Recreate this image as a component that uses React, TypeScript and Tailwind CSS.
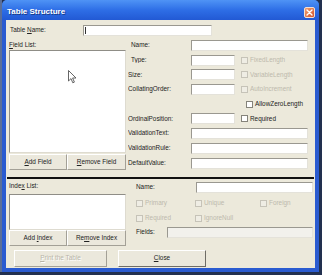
import React from 'react';

const font = { fontFamily: '"Liberation Sans", Arial, sans-serif' };

const U: React.FC<{ children: React.ReactNode }> = ({ children }) => <span className="underline">{children}</span>;

const Input: React.FC<{ w: string; disabled?: boolean; caret?: boolean }> = ({ w, disabled, caret }) => (
  <div
    className={`${w} h-[11px] border border-t-[#9a9890] border-l-[#9a9890] border-r-[#e4e2da] border-b-[#e4e2da] ${
      disabled ? 'bg-[#f2f1ec]' : 'bg-white'
    } relative`}
  >
    {caret && <div className="absolute left-[1px] top-[1px] w-[1px] h-[7px] bg-[#333]" />}
  </div>
);

const Check: React.FC<{ label: string; disabled?: boolean; className?: string }> = ({ label, disabled, className = '' }) => (
  <div className={`flex items-center h-[10px] ${className}`}>
    <div
      className={`w-[7px] h-[7px] border ${
        disabled ? 'border-[#c6c3b8] bg-[#efede4]' : 'border-[#85837a] bg-white'
      }`}
    />
    <span className={`ml-[2px] ${disabled ? 'text-[#bdb9ad]' : 'text-[#222]'}`}>{label}</span>
  </div>
);

const Button: React.FC<{ w: string; h?: string; disabled?: boolean; strong?: boolean; children: React.ReactNode }> = ({
  w,
  h = 'h-[16px]',
  disabled,
  strong,
  children,
}) => (
  <div
    className={`${w} ${h} flex items-center justify-center bg-[#ebe8dc] border border-t-white border-l-white ${
      strong ? 'border-r-[#6e6c66] border-b-[#6e6c66]' : 'border-r-[#a3a096] border-b-[#a3a096]'
    } ${disabled ? 'text-[#b9b5a9]' : 'text-[#222]'}`}
  >
    <span className="whitespace-pre">{children}</span>
  </div>
);

const FieldRow: React.FC<{ label: string; input?: 'short' | 'wide'; check?: string; checkDisabled?: boolean; pad?: boolean }> = ({
  label,
  input,
  check,
  checkDisabled,
  pad,
}) => (
  <div className="flex items-center h-[11px]">
    <div className={`w-[63px] shrink-0 ${pad ? 'pl-[3px]' : ''} text-[#222] whitespace-nowrap overflow-hidden`}>{label}</div>
    {input === 'wide' && <Input w="w-[117px]" />}
    {input === 'short' && <Input w="w-[44px]" />}
    {!input && <div className="w-[49px]" />}
    {check && <Check label={check} disabled={checkDisabled} className="ml-[6px]" />}
  </div>
);

const App: React.FC = () => {
  return (
    <div className="w-[322px] h-[275px] bg-[#22304f] overflow-hidden text-[6.4px] leading-none" style={font}>
      <div className="flex h-[272px]">
        <div className="w-[2px] bg-[#5b6f98]" />
        <div className="w-[317px] h-[272px] bg-[#2a5bd0] rounded-t-[5px] flex flex-col">
          {/* Title bar */}
          <div className="h-[20px] flex items-center justify-between pl-[5px] pr-[4px] pt-[4px] rounded-t-[5px] bg-gradient-to-b from-[#4f93f5] via-[#2e6ee6] to-[#2259d4]">
            <span className="text-white font-bold text-[8px] [text-shadow:1px_1px_0_#1a3d8a]">Table Structure</span>
            <div className="w-[11px] h-[11px] rounded-[2px] bg-gradient-to-br from-[#f0a070] to-[#d2502a] border border-[#f4e0d4] flex items-center justify-center">
              <svg width="7" height="7" viewBox="0 0 7 7">
                <path d="M1 1 L6 6 M6 1 L1 6" stroke="white" strokeWidth="1.4" strokeLinecap="round" />
              </svg>
            </div>
          </div>

          {/* Body */}
          <div className="mx-[4px] h-[248px] bg-[#ece9db] flex flex-col pt-[5px] text-[#222]">
            {/* Table Name */}
            <div className="flex items-center h-[11px] pl-[4px]">
              <div className="w-[73px]">
                <span>Table <U>N</U>ame:</span>
              </div>
              <Input w="w-[129px]" caret />
            </div>

            {/* Field section */}
            <div className="flex mt-[4px]">
              <div className="ml-[3px] w-[117px] flex flex-col">
                <div className="h-[10px] flex items-center">
                  <span><U>F</U>ield List:</span>
                </div>
                <div className="h-[103px] bg-white border border-t-[#8f8d86] border-l-[#8f8d86] border-r-[#dedbd0] border-b-[#dedbd0] relative">
                  <svg className="absolute left-[58px] top-[19px]" width="9" height="14" viewBox="0 0 9 14">
                    <path d="M0.5 0.5 L0.5 11 L3 8.6 L4.8 12.8 L6.4 12.1 L4.6 8 L8 8 Z" fill="white" stroke="#555" strokeWidth="0.9" />
                  </svg>
                </div>
                <div className="flex mt-[1px]">
                  <Button w="w-[58px]">
                    <U>A</U>dd Field
                  </Button>
                  <Button w="w-[59px]">
                    <U>R</U>emove Field
                  </Button>
                </div>
              </div>
              <div className="ml-[2px] flex flex-col gap-[3.7px]">
                <FieldRow label="Name:" input="wide" pad />
                <FieldRow label="Type:" input="short" check="FixedLength" checkDisabled pad />
                <FieldRow label="Size:" input="short" check="VariableLength" checkDisabled />
                <FieldRow label="CollatingOrder:" input="short" check="AutoIncrement" checkDisabled />
                <FieldRow label="" check="AllowZeroLength" />
                <FieldRow label="OrdinalPosition:" input="short" check="Required" />
                <FieldRow label="ValidationText:" input="wide" />
                <FieldRow label="ValidationRule:" input="wide" />
                <FieldRow label="DefaultValue:" input="wide" />
              </div>
            </div>

            {/* Separator */}
            <div className="mt-[7px] ml-[1px] w-[307px] h-[2px] bg-[#111]" />

            {/* Index section */}
            <div className="flex">
              <div className="ml-[3px] w-[117px] flex flex-col">
                <div className="h-[10px] mt-[2px] flex items-center">
                  <span>Inde<U>x</U> List:</span>
                </div>
                <div className="h-[36px] mt-[3px] bg-white border border-t-[#8f8d86] border-l-[#8f8d86] border-r-[#dedbd0] border-b-[#dedbd0]" />
                <div className="flex">
                  <Button w="w-[58px]">
                    Add <U>I</U>ndex
                  </Button>
                  <Button w="w-[59px]">
                    Re<U>m</U>ove Index
                  </Button>
                </div>
              </div>
              <div className="ml-[10px] flex flex-col">
                <div className="flex items-center h-[11px] mt-[3px]">
                  <div className="w-[60px]">Name:</div>
                  <Input w="w-[117px]" />
                </div>
                <div className="flex mt-[5px]">
                  <Check label="Primary" disabled className="w-[59px]" />
                  <Check label="Unique" disabled className="w-[65px]" />
                  <Check label="Foreign" disabled />
                </div>
                <div className="flex mt-[5px]">
                  <Check label="Required" disabled className="w-[59px]" />
                  <Check label="IgnoreNull" disabled />
                </div>
                <div className="flex items-center h-[11px] mt-[4px]">
                  <div className="w-[31px]">Fields:</div>
                  <Input w="w-[146px]" disabled />
                </div>
              </div>
            </div>

            {/* Bottom buttons */}
            <div className="flex mt-[4px]">
              <div className="ml-[8px]">
                <Button w="w-[93px]" h="h-[17px]" disabled>
                  <span className="[text-shadow:1px_1px_0_#ffffff]">
                    <U>P</U>rint the Table
                  </span>
                </Button>
              </div>
              <div className="ml-[11px]">
                <Button w="w-[88px]" h="h-[17px]" strong>
                  <U>C</U>lose
                </Button>
              </div>
            </div>
          </div>
          <div className="flex-1" />
        </div>
        <div className="w-[3px] bg-[#22304f]" />
      </div>
    </div>
  );
};

export default App;
